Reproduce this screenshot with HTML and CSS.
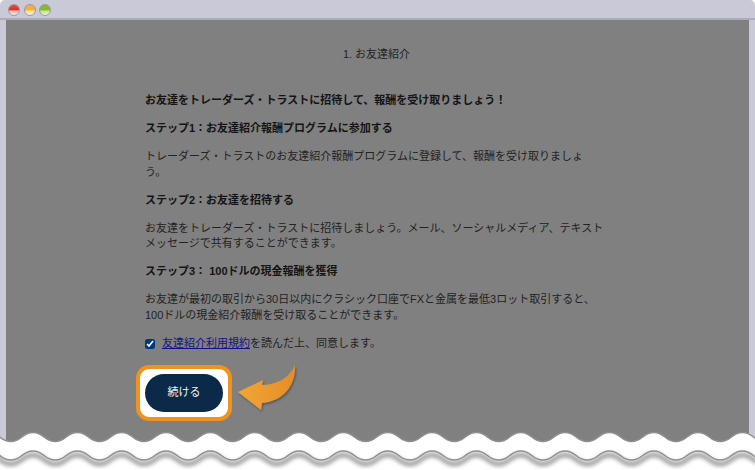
FILE: index.html
```html
<!DOCTYPE html>
<html lang="ja">
<head>
<meta charset="utf-8">
<title>お友達紹介</title>
<link rel="stylesheet" href="styles.css">
</head>
<body>
<div class="window">
  <header class="titlebar">
    <span class="light light-red"></span>
    <span class="light light-yellow"></span>
    <span class="light light-green"></span>
  </header>
  <main class="content">
    <h1 class="title">1. お友達紹介</h1>
    <section class="article">
      <p class="strong">お友達をトレーダーズ・トラストに招待して、報酬を受け取りましょう！</p>
      <p class="strong">ステップ1：お友達紹介報酬プログラムに参加する</p>
      <p>トレーダーズ・トラストのお友達紹介報酬プログラムに登録して、報酬を受け取りましょ<br>う。</p>
      <p class="strong">ステップ2：お友達を招待する</p>
      <p>お友達をトレーダーズ・トラストに招待しましょう。メール、ソーシャルメディア、テキストメッセージで共有することができます。</p>
      <p class="strong">ステップ3： 100ドルの現金報酬を獲得</p>
      <p>お友達が最初の取引から30日以内にクラシック口座でFXと金属を最低3ロット取引すると、100ドルの現金紹介報酬を受け取ることができます。</p>
      <label class="agree"><input class="check" type="checkbox" checked><span><a class="link" href="#">友達紹介利用規約</a>を読んだ上、同意します。</span></label>
      <div class="highlight"><button class="continue" type="button">続ける</button></div>
    </section>
  </main>
</div>
<svg class="arrow" width="70" height="60" viewBox="230 360 70 60" aria-hidden="true">
  <defs>
    <linearGradient id="arrowFill" x1="0" y1="0" x2="1" y2="0">
      <stop offset="0" stop-color="#f2a633"/>
      <stop offset="1" stop-color="#e58d2a"/>
    </linearGradient>
    <filter id="arrowShadow" x="-20%" y="-20%" width="150%" height="150%">
      <feDropShadow dx="1" dy="1.5" stdDeviation="1.2" flood-color="#000" flood-opacity="0.35"/>
    </filter>
  </defs>
  <path d="M238 392 L263 380 L262 385 C276 385 290 378 295 365 C296 385 284 401 262 403 L261 410 Z" fill="url(#arrowFill)" filter="url(#arrowShadow)"/>
</svg>
<svg class="torn" width="755" height="50" viewBox="0 420 755 50" aria-hidden="true">
  <defs>
    <path id="waveLine" d="M-33.5 442 c11 0 11 -9 22.17 -9 s11 9 22.17 9 s11 -9 22.17 -9 s11 9 22.17 9 s11 -9 22.17 -9 s11 9 22.17 9 s11 -9 22.17 -9 s11 9 22.17 9 s11 -9 22.17 -9 s11 9 22.17 9 s11 -9 22.17 -9 s11 9 22.17 9 s11 -9 22.17 -9 s11 9 22.17 9 s11 -9 22.17 -9 s11 9 22.17 9 s11 -9 22.17 -9 s11 9 22.17 9 s11 -9 22.17 -9 s11 9 22.17 9 s11 -9 22.17 -9 s11 9 22.17 9 s11 -9 22.17 -9 s11 9 22.17 9 s11 -9 22.17 -9 s11 9 22.17 9 s11 -9 22.17 -9 s11 9 22.17 9 s11 -9 22.17 -9 s11 9 22.17 9 s11 -9 22.17 -9 s11 9 22.17 9 s11 -9 22.17 -9 s11 9 22.17 9 s11 -9 22.17 -9 s11 9 22.17 9 s11 -9 22.17 -9 s11 9 22.17 9"/>
    <filter id="waveBlur" x="-5%" y="-50%" width="110%" height="200%">
      <feGaussianBlur stdDeviation="2"/>
    </filter>
  </defs>
  <use href="#waveLine" y="-0.5" class="wave-fill"/>
  <rect class="wave-solid" x="0" y="441" width="755" height="29"/>
  <use href="#waveLine" y="22" class="wave-shadow" filter="url(#waveBlur)"/>
  <rect class="wave-solid" x="0" y="443" width="755" height="6"/>
  <use href="#waveLine" y="-0.5" class="wave-stroke"/>
  <use href="#waveLine" y="18" class="wave-stroke"/>
</svg>
</body>
</html>
```
FILE: styles.css
```css
html, body {
  margin: 0;
  padding: 0;
  background: #fff;
}
body {
  position: relative;
  width: 755px;
  height: 470px;
  overflow: hidden;
  font-family: "Liberation Sans", "Noto Sans CJK JP", sans-serif;
  font-size: 11px;
  line-height: 15.5px;
  color: #222;
}
.window {
  height: 470px;
  display: flex;
  flex-direction: column;
  background: #c9c9d8;
  border-radius: 5px 5px 0 0;
  padding: 0 6px;
  box-sizing: border-box;
}
.titlebar {
  height: 16px;
  flex: none;
  display: flex;
  align-items: center;
  gap: 3.5px;
  border-bottom: 2px solid #ababc2;
  margin: 0 -6px;
  padding: 2px 0 0 8px;
}
.light {
  width: 12px;
  height: 12px;
  border-radius: 50%;
  box-sizing: border-box;
  border: 1px solid #9a9aa0;
}
.light-red { background: linear-gradient(#e8484a 0, #ee2a20 45%, #f0b0a8 60%, #f4eeee 100%); }
.light-yellow { background: linear-gradient(#f4b040 0, #f8b030 45%, #f8dca0 62%, #f8f0e4 100%); }
.light-green { background: linear-gradient(#80b830 0, #80c020 45%, #c8e090 62%, #eef4e4 100%); }
.content {
  flex: 1;
  background: #808080;
  padding-top: 26px;
  min-height: 0;
}
.title {
  margin: 0 0 31px;
  padding-right: 2px;
  font-size: 11px;
  line-height: 16px;
  font-weight: 400;
  text-align: center;
}
.article {
  width: 460px;
  margin-left: 139px;
}
.article p {
  margin: 0 0 12.5px;
}
.article .strong {
  font-weight: 700;
  color: #141414;
}
.agree {
  display: flex;
  align-items: center;
  gap: 7px;
  height: 16px;
  margin-top: 12.5px;
}
.check {
  width: 10px;
  height: 10px;
  margin: 0;
  accent-color: #00387c;
}
.link {
  color: #14108a;
  text-decoration: underline;
}
.highlight {
  width: 96px;
  height: 56px;
  box-sizing: border-box;
  margin: 13px 0 0 -9px;
  padding: 5px;
  display: flex;
  align-items: center;
  justify-content: center;
  background: #fff;
  border: 4px solid #f0921e;
  border-radius: 13px;
}
.continue {
  width: 78px;
  height: 38px;
  padding: 0;
  border: 0;
  border-radius: 19px;
  background: #0b2a49;
  color: #f2f2f2;
  font: 400 11px/1 "Liberation Sans", "Noto Sans CJK JP", sans-serif;
}
.arrow {
  position: absolute;
  left: 230px;
  top: 360px;
}
.torn {
  position: absolute;
  left: 0;
  top: 420px;
}
.wave-fill { fill: #fff; stroke: none; }
.wave-solid { fill: #fff; }
.wave-shadow { fill: none; stroke: #666; stroke-width: 4; opacity: 0.75; }
.wave-stroke { fill: none; stroke: #8f8f8f; stroke-width: 1.6; }
```
